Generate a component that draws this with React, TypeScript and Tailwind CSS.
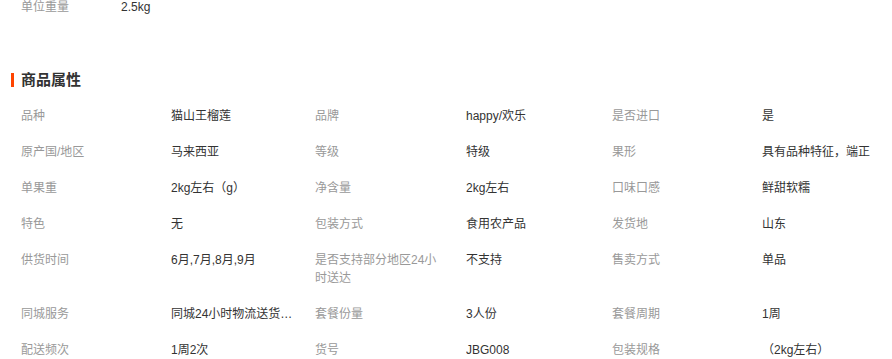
const rows: [string, string, string, string, string, string][] = [
  ["品种", "猫山王榴莲", "品牌", "happy/欢乐", "是否进口", "是"],
  ["原产国/地区", "马来西亚", "等级", "特级", "果形", "具有品种特征，端正"],
  ["单果重", "2kg左右（g）", "净含量", "2kg左右", "口味口感", "鲜甜软糯"],
  ["特色", "无", "包装方式", "食用农产品", "发货地", "山东"],
  ["供货时间", "6月,7月,8月,9月", "是否支持部分地区24小时送达", "不支持", "售卖方式", "单品"],
  ["同城服务", "同城24小时物流送货上门", "套餐份量", "3人份", "套餐周期", "1周"],
  ["配送频次", "1周2次", "货号", "JBG008", "包装规格", "（2kg左右）"],
];

export default function App() {
  return (
    <div className="h-[359px] w-[892px] overflow-hidden bg-white font-['Liberation_Sans','Noto_Sans_CJK_SC',sans-serif] text-[12px]">
      <div className="flex h-[14px] items-center pl-[21px] leading-[14px]">
        <span className="w-[100px] text-[#999]">单位重量</span>
        <span className="text-[#333]">2.5kg</span>
      </div>

      <div className="mt-[56px] flex items-center gap-[7px] pl-[11px]">
        <span className="h-[14px] w-[3px] bg-[#ff4400]" />
        <h3 className="text-[15px] font-bold leading-[20px] text-[#333]">商品属性</h3>
      </div>

      <div className="mt-[8px] grid grid-cols-[150px_144px_151px_146px_150px_1fr] pl-[21px] leading-[18px]">
        {rows.map((r) => (
          <div key={r[0]} className="contents">
            <div className="py-[9px] pr-[22px] text-[#999]">{r[0]}</div>
            <div className="truncate py-[9px] pr-[18px] text-[#333]">{r[1]}</div>
            <div className="py-[9px] pr-[22px] text-[#999]">{r[2]}</div>
            <div className="truncate py-[9px] pr-[18px] text-[#333]">{r[3]}</div>
            <div className="py-[9px] pr-[22px] text-[#999]">{r[4]}</div>
            <div className="whitespace-nowrap py-[9px] text-[#333]">{r[5]}</div>
          </div>
        ))}
      </div>
    </div>
  );
}
